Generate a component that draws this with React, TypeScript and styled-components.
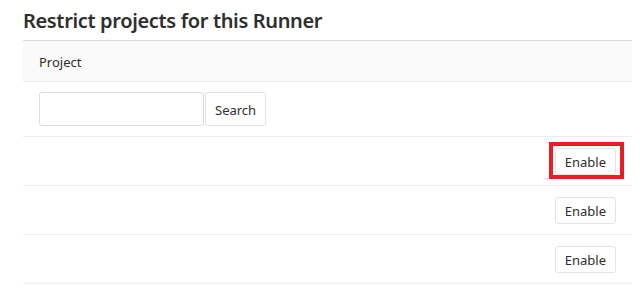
import styled, { createGlobalStyle } from 'styled-components';

const GlobalStyle = createGlobalStyle`
  html, body {
    margin: 0;
    padding: 0;
    background: #fff;
  }
  body {
    font-family: "Noto Sans", "Open Sans", "DejaVu Sans", sans-serif;
    color: #2e2e2e;
  }
`;

const Page = styled.div`
  padding-left: 23px;
  width: 609px;
`;

const Title = styled.h3`
  margin: 0;
  height: 40px;
  font-size: 20px;
  font-weight: 600;
  line-height: 41px;
  color: #2e2e2e;
  letter-spacing: -0.35px;
`;

const Table = styled.div`
  border-top: 1px solid #dcdcdc;
`;

const HeadRow = styled.div`
  box-sizing: border-box;
  height: 41px;
  display: flex;
  align-items: center;
  padding: 2px 0 0 16px;
  background: #fafafa;
  border-bottom: 1px solid #ececec;
  font-size: 13px;
`;

const Row = styled.div<{ $right?: boolean }>`
  display: flex;
  align-items: center;
  gap: 1px;
  justify-content: ${(p) => (p.$right ? 'flex-end' : 'flex-start')};
  padding: 10px 16px 10px 16px;
  min-height: 28px;
  border-bottom: 1px solid #ececec;
`;

const SearchInput = styled.input`
  box-sizing: border-box;
  width: 165px;
  height: 34px;
  border: 1px solid #dcdcdc;
  border-radius: 3px;
  padding: 0 8px;
  font: inherit;
  font-size: 13px;
  outline: none;
`;

const Button = styled.button<{ $tall?: boolean }>`
  box-sizing: border-box;
  height: ${(p) => (p.$tall ? '34px' : '27px')};
  padding: 2px 9px 0;
  border: 1px solid #e3e3e3;
  border-radius: 3px;
  background: #fff;
  color: #2e2e2e;
  font-family: inherit;
  font-size: 13px;
  cursor: pointer;
`;

const Highlight = styled.div`
  border: 4px solid #ed1c24;
  padding: 2px 4px 0 2px;
  margin: -6px -8px -4px 0;
  display: flex;
`;

const projects = [true, false, false];

export default function App() {
  return (
    <>
      <GlobalStyle />
      <Page>
        <Title>Restrict projects for this Runner</Title>
        <Table>
          <HeadRow>Project</HeadRow>
          <Row>
            <SearchInput />
            <Button $tall>Search</Button>
          </Row>
          {projects.map((marked, i) => (
            <Row $right key={i}>
              {marked ? (
                <Highlight>
                  <Button>Enable</Button>
                </Highlight>
              ) : (
                <Button>Enable</Button>
              )}
            </Row>
          ))}
        </Table>
      </Page>
    </>
  );
}
